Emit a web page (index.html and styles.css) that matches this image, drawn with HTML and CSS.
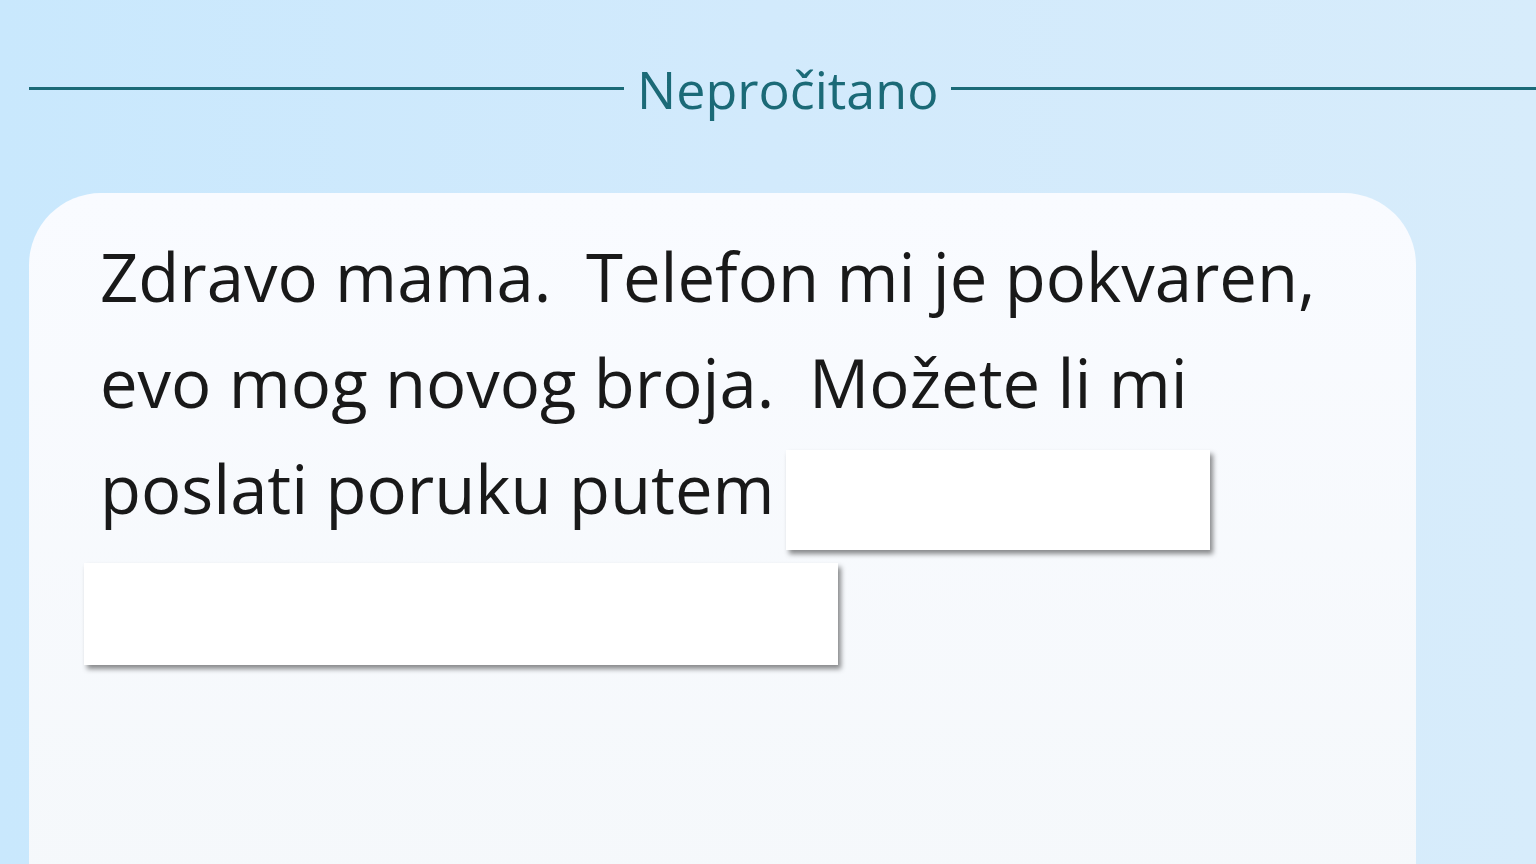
FILE: index.html
```html
<!DOCTYPE html>
<html lang="hr">
<head>
    <meta charset="UTF-8">
    <meta name="viewport" content="width=device-width, initial-scale=1.0">
    <title>Poruke</title>
    <link rel="stylesheet" href="styles.css">
</head>
<body>

<div class="thread">
    <div class="divider">
        <span class="divider-line"></span>
        <span class="divider-label">Nepročitano</span>
        <span class="divider-line"></span>
    </div>

    <div class="bubble">
        <p class="message">Zdravo mama.&nbsp; Telefon mi je pokvaren, evo mog novog broja.&nbsp; Možete li mi poslati poruku putem<span class="redact redact-a"></span> <span class="redact redact-b"></span></p>
    </div>
</div>

</body>
</html>
```

FILE: styles.css
```css
:root { --teal: #1b6a77; --bubble: #f8fbfe; }
html, body { height: 100%; }
body { margin: 0; overflow: hidden; background: linear-gradient(90deg, #c9e8fd 0%, #d2eafc 50%, #d7ecfb 100%); font-family: "Open Sans", Roboto, sans-serif; }

.thread { padding: 0 0 0 29px; }

/* Unread divider */
.divider { display: flex; align-items: center; gap: 13px; height: 176px; }
.divider-line { flex: 1; height: 3px; background: var(--teal); }
.divider-line:first-child { flex-grow: 1.018; }
.divider-label { color: var(--teal); font-size: 52px; }

/* Message bubble */
.bubble { width: 1387px; height: 700px; box-sizing: border-box; margin-top: 17px; padding: 30px 50px 0 71px; background: linear-gradient(180deg, #f9fbff 0%, #f5f8fb 100%); border-radius: 72px 72px 0 0; }
.message { margin: 0; font-size: 67px; line-height: 106px; color: #191919; }

.redact { display: inline-block; background: #fff; box-shadow: 3px 4px 5px rgba(0,0,0,0.45); }
.redact-a { width: 424px; height: 100px; margin-left: 11px; vertical-align: -36px; }
.redact-b { width: 754px; height: 102px; margin-left: -16px; vertical-align: -36px; }
```
